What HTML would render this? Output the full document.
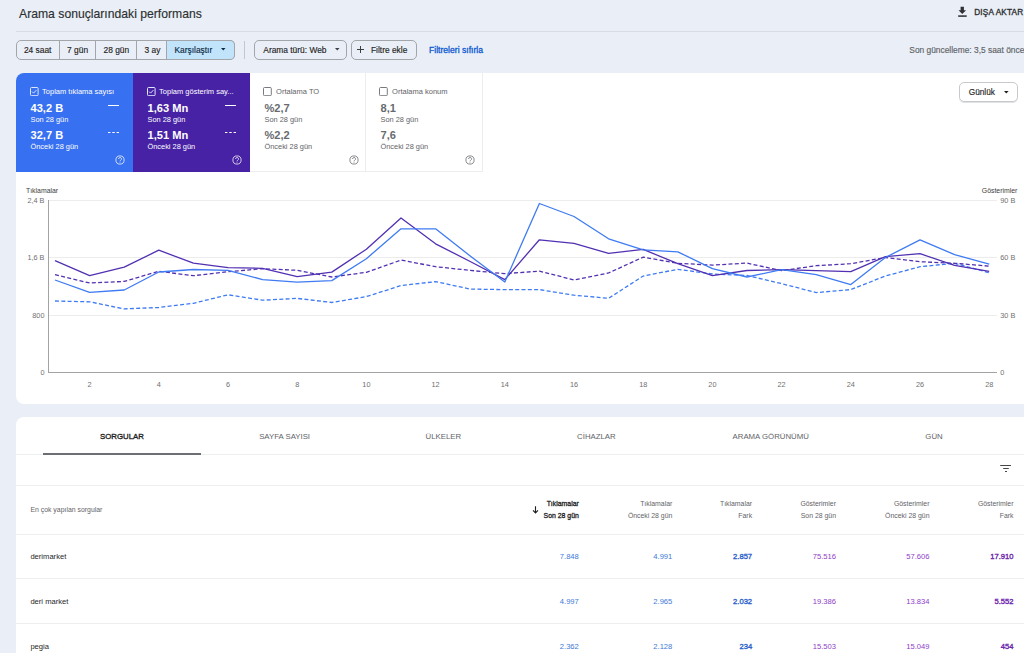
<!DOCTYPE html>
<html><head><meta charset="utf-8"><style>
html,body{margin:0;padding:0;}
body{width:1024px;height:653px;overflow:hidden;position:relative;background:#eaeff7;font-family:"Liberation Sans",sans-serif;}
.t{position:absolute;line-height:1;white-space:nowrap;-webkit-text-stroke:0.15px currentColor;}
</style></head><body>
<div class="t" style="left:19.00px;top:8.00px;font-size:12.2px;color:#2d2f31;font-weight:400;">Arama sonuçlarındaki performans</div>
<svg style="position:absolute;left:957px;top:6px" width="11" height="12" viewBox="0 0 11 12"><path d="M3.6 0.7h3.3v3.6h2.2L5.25 7.9 1.5 4.3h2.1z" fill="#303134"/><rect x="1.2" y="9.2" width="8.5" height="1.8" fill="#4a4c4f"/></svg>
<div class="t" style="left:974.20px;top:9.00px;font-size:8.2px;color:#303134;font-weight:400;letter-spacing:0.2px;-webkit-text-stroke:0.35px #303134;">DIŞA AKTAR</div>
<div style="position:absolute;left:16px;top:31px;width:1008px;height:1px;background:#d9dde3"></div>
<div style="position:absolute;left:16px;top:40px;width:219px;height:19.5px;border:1px solid #a2a5aa;border-radius:5px;box-sizing:border-box;overflow:hidden"></div>
<div style="position:absolute;left:166px;top:40px;width:69px;height:19.5px;background:#c2e4fb;border:1px solid #a2a5aa;border-left:none;border-radius:0 5px 5px 0;box-sizing:border-box"></div>
<div style="position:absolute;left:59px;top:40px;width:1px;height:19.5px;background:#a2a5aa"></div>
<div style="position:absolute;left:95px;top:40px;width:1px;height:19.5px;background:#a2a5aa"></div>
<div style="position:absolute;left:136px;top:40px;width:1px;height:19.5px;background:#a2a5aa"></div>
<div style="position:absolute;left:166px;top:40px;width:1px;height:19.5px;background:#a2a5aa"></div>
<div class="t" style="left:23.90px;top:46.00px;font-size:8.4px;color:#1f1f1f;font-weight:400;">24 saat</div>
<div class="t" style="left:67.10px;top:46.00px;font-size:8.4px;color:#1f1f1f;font-weight:400;">7 gün</div>
<div class="t" style="left:103.50px;top:46.00px;font-size:8.4px;color:#1f1f1f;font-weight:400;">28 gün</div>
<div class="t" style="left:144.50px;top:46.00px;font-size:8.4px;color:#1f1f1f;font-weight:400;">3 ay</div>
<div class="t" style="left:174.50px;top:46.00px;font-size:8.4px;color:#0b2a45;font-weight:400;">Karşılaştır</div>
<svg style="position:absolute;left:220.5px;top:48px" width="5" height="3"><path d="M0 0h4.5L2.25 2.5z" fill="#0b2a45"/></svg>
<div style="position:absolute;left:244px;top:40.5px;width:1px;height:18.5px;background:#c4c7cc"></div>
<div style="position:absolute;left:253.7px;top:40.3px;width:93px;height:19.3px;border:1px solid #a2a5aa;border-radius:5px;box-sizing:border-box"></div>
<div class="t" style="left:263.30px;top:46.00px;font-size:8.4px;color:#1f1f1f;font-weight:400;">Arama türü: Web</div>
<svg style="position:absolute;left:334.5px;top:48px" width="5" height="3"><path d="M0 0h4.5L2.25 2.5z" fill="#3c4043"/></svg>
<div style="position:absolute;left:351.3px;top:40.3px;width:66.1px;height:19.3px;border:1px solid #a2a5aa;border-radius:5px;box-sizing:border-box"></div>
<svg style="position:absolute;left:357.3px;top:46.3px" width="8" height="8"><path d="M3.5 0v7M0 3.5h7" stroke="#3c4043" stroke-width="1"/></svg>
<div class="t" style="left:371.00px;top:46.00px;font-size:8.4px;color:#1f1f1f;font-weight:400;">Filtre ekle</div>
<div class="t" style="left:429.00px;top:46.00px;font-size:8.6px;color:#0b57d0;font-weight:400;-webkit-text-stroke:0.3px #0b57d0;">Filtreleri sıfırla</div>
<div class="t" style="left:909.30px;top:46.00px;font-size:8.4px;color:#5f6368;font-weight:400;">Son güncelleme: 3,5 saat önce</div>
<div style="position:absolute;left:16px;top:73px;width:1020px;height:331px;background:#fff;border-radius:8px"></div>
<div style="position:absolute;left:16px;top:73px;width:117px;height:99px;background:#3770f1;border-radius:8px 0 0 0"></div>
<div style="position:absolute;left:133px;top:73px;width:117px;height:99px;background:#4822a5"></div>
<div style="position:absolute;left:365px;top:73px;width:1px;height:99px;background:#ebedef"></div>
<div style="position:absolute;left:482px;top:73px;width:1px;height:99px;background:#ebedef"></div>
<div style="position:absolute;left:250px;top:171px;width:233px;height:1px;background:#ebedef"></div>
<svg style="position:absolute;left:29.5px;top:87px" width="9" height="9" viewBox="0 0 9 9"><rect x="0.5" y="0.5" width="7.6" height="8.2" rx="1" fill="none" stroke="#dfe7fd" stroke-width="1"/><path d="M2.1 4.6l1.5 1.5 2.8-3" fill="none" stroke="#e8eefe" stroke-width="0.9"/></svg>
<div class="t" style="left:42.10px;top:88.00px;font-size:7.5px;color:#ffffff;font-weight:400;-webkit-text-stroke:0;">Toplam tıklama sayısı</div>
<div class="t" style="left:30.50px;top:103.00px;font-size:11.1px;color:#ffffff;font-weight:700;-webkit-text-stroke:0;">43,2 B</div>
<div class="t" style="left:30.50px;top:116.00px;font-size:7.4px;color:#ffffff;font-weight:400;-webkit-text-stroke:0;">Son 28 gün</div>
<div class="t" style="left:30.50px;top:130.00px;font-size:11.1px;color:#ffffff;font-weight:700;-webkit-text-stroke:0;">32,7 B</div>
<div class="t" style="left:30.50px;top:143.00px;font-size:7.4px;color:#ffffff;font-weight:400;-webkit-text-stroke:0;">Önceki 28 gün</div>
<div style="position:absolute;left:107.8px;top:105.2px;width:11px;height:1.3px;background:#fff"></div>
<svg style="position:absolute;left:107.8px;top:131.6px" width="11" height="1.5"><path d="M0 0.65h11" stroke="#fff" stroke-width="1.3" stroke-dasharray="2.4 1.9"/></svg>
<svg style="position:absolute;left:115.2px;top:154.5px" width="10" height="10" viewBox="0 0 10 10"><circle cx="5" cy="5" r="4.1" fill="none" stroke="#ffffff" stroke-width="0.75"/><path d="M3.6 4a1.45 1.45 0 1 1 2.1 1.25c-0.45 0.3-0.65 0.5-0.65 1.05" fill="none" stroke="#ffffff" stroke-width="0.75"/><circle cx="5" cy="7.2" r="0.45" fill="#ffffff"/></svg>
<svg style="position:absolute;left:146.5px;top:87px" width="9" height="9" viewBox="0 0 9 9"><rect x="0.5" y="0.5" width="7.6" height="8.2" rx="1" fill="none" stroke="#dfe7fd" stroke-width="1"/><path d="M2.1 4.6l1.5 1.5 2.8-3" fill="none" stroke="#e8eefe" stroke-width="0.9"/></svg>
<div class="t" style="left:159.10px;top:88.00px;font-size:7.5px;color:#ffffff;font-weight:400;-webkit-text-stroke:0;">Toplam gösterim say...</div>
<div class="t" style="left:147.50px;top:103.00px;font-size:11.1px;color:#ffffff;font-weight:700;-webkit-text-stroke:0;">1,63 Mn</div>
<div class="t" style="left:147.50px;top:116.00px;font-size:7.4px;color:#ffffff;font-weight:400;-webkit-text-stroke:0;">Son 28 gün</div>
<div class="t" style="left:147.50px;top:130.00px;font-size:11.1px;color:#ffffff;font-weight:700;-webkit-text-stroke:0;">1,51 Mn</div>
<div class="t" style="left:147.50px;top:143.00px;font-size:7.4px;color:#ffffff;font-weight:400;-webkit-text-stroke:0;">Önceki 28 gün</div>
<div style="position:absolute;left:224.8px;top:105.2px;width:11px;height:1.3px;background:#fff"></div>
<svg style="position:absolute;left:224.8px;top:131.6px" width="11" height="1.5"><path d="M0 0.65h11" stroke="#fff" stroke-width="1.3" stroke-dasharray="2.4 1.9"/></svg>
<svg style="position:absolute;left:232.2px;top:154.5px" width="10" height="10" viewBox="0 0 10 10"><circle cx="5" cy="5" r="4.1" fill="none" stroke="#ffffff" stroke-width="0.75"/><path d="M3.6 4a1.45 1.45 0 1 1 2.1 1.25c-0.45 0.3-0.65 0.5-0.65 1.05" fill="none" stroke="#ffffff" stroke-width="0.75"/><circle cx="5" cy="7.2" r="0.45" fill="#ffffff"/></svg>
<svg style="position:absolute;left:263px;top:87px" width="9" height="9" viewBox="0 0 9 9"><rect x="0.5" y="0.5" width="7.8" height="8.2" rx="1" fill="none" stroke="#6f7378" stroke-width="0.95"/></svg>
<div class="t" style="left:276.10px;top:88.00px;font-size:7.5px;color:#5f6368;font-weight:400;-webkit-text-stroke:0;">Ortalama TO</div>
<div class="t" style="left:264.50px;top:103.00px;font-size:11.1px;color:#676b70;font-weight:700;-webkit-text-stroke:0;">%2,7</div>
<div class="t" style="left:264.50px;top:116.00px;font-size:7.4px;color:#5f6368;font-weight:400;-webkit-text-stroke:0;">Son 28 gün</div>
<div class="t" style="left:264.50px;top:130.00px;font-size:11.1px;color:#676b70;font-weight:700;-webkit-text-stroke:0;">%2,2</div>
<div class="t" style="left:264.50px;top:143.00px;font-size:7.4px;color:#5f6368;font-weight:400;-webkit-text-stroke:0;">Önceki 28 gün</div>
<svg style="position:absolute;left:349.2px;top:154.5px" width="10" height="10" viewBox="0 0 10 10"><circle cx="5" cy="5" r="4.1" fill="none" stroke="#5f6368" stroke-width="0.75"/><path d="M3.6 4a1.45 1.45 0 1 1 2.1 1.25c-0.45 0.3-0.65 0.5-0.65 1.05" fill="none" stroke="#5f6368" stroke-width="0.75"/><circle cx="5" cy="7.2" r="0.45" fill="#5f6368"/></svg>
<svg style="position:absolute;left:379px;top:87px" width="9" height="9" viewBox="0 0 9 9"><rect x="0.5" y="0.5" width="7.8" height="8.2" rx="1" fill="none" stroke="#6f7378" stroke-width="0.95"/></svg>
<div class="t" style="left:392.10px;top:88.00px;font-size:7.5px;color:#5f6368;font-weight:400;-webkit-text-stroke:0;">Ortalama konum</div>
<div class="t" style="left:380.50px;top:103.00px;font-size:11.1px;color:#676b70;font-weight:700;-webkit-text-stroke:0;">8,1</div>
<div class="t" style="left:380.50px;top:116.00px;font-size:7.4px;color:#5f6368;font-weight:400;-webkit-text-stroke:0;">Son 28 gün</div>
<div class="t" style="left:380.50px;top:130.00px;font-size:11.1px;color:#676b70;font-weight:700;-webkit-text-stroke:0;">7,6</div>
<div class="t" style="left:380.50px;top:143.00px;font-size:7.4px;color:#5f6368;font-weight:400;-webkit-text-stroke:0;">Önceki 28 gün</div>
<svg style="position:absolute;left:465.2px;top:154.5px" width="10" height="10" viewBox="0 0 10 10"><circle cx="5" cy="5" r="4.1" fill="none" stroke="#5f6368" stroke-width="0.75"/><path d="M3.6 4a1.45 1.45 0 1 1 2.1 1.25c-0.45 0.3-0.65 0.5-0.65 1.05" fill="none" stroke="#5f6368" stroke-width="0.75"/><circle cx="5" cy="7.2" r="0.45" fill="#5f6368"/></svg>
<div style="position:absolute;left:959px;top:82px;width:58.5px;height:19.5px;border:1px solid #c7c9cc;border-radius:5px;box-sizing:border-box;box-shadow:0 1px 0 #e0e2e5"></div>
<div class="t" style="left:968.70px;top:88.00px;font-size:8.3px;color:#1f1f1f;font-weight:400;">Günlük</div>
<svg style="position:absolute;left:1004.3px;top:91px" width="5" height="3"><path d="M0 0h4.6L2.3 2.5z" fill="#1f1f1f"/></svg>
<div class="t" style="left:26.00px;top:188.00px;font-size:6.9px;color:#3c3c3c;font-weight:400;-webkit-text-stroke:0;">Tıklamalar</div>
<div class="t" style="right:6.60px;top:188.00px;font-size:6.9px;color:#3c3c3c;font-weight:400;-webkit-text-stroke:0;">Gösterimler</div>
<div class="t" style="right:979.50px;top:197.00px;font-size:7.3px;color:#707070;font-weight:400;-webkit-text-stroke:0;">2,4 B</div>
<div class="t" style="left:1000.30px;top:197.00px;font-size:7.3px;color:#707070;font-weight:400;-webkit-text-stroke:0;">90 B</div>
<div class="t" style="right:979.50px;top:254.00px;font-size:7.3px;color:#707070;font-weight:400;-webkit-text-stroke:0;">1,6 B</div>
<div class="t" style="left:1000.30px;top:254.00px;font-size:7.3px;color:#707070;font-weight:400;-webkit-text-stroke:0;">60 B</div>
<div class="t" style="right:979.50px;top:312.00px;font-size:7.3px;color:#707070;font-weight:400;-webkit-text-stroke:0;">800</div>
<div class="t" style="left:1000.30px;top:312.00px;font-size:7.3px;color:#707070;font-weight:400;-webkit-text-stroke:0;">30 B</div>
<div class="t" style="right:979.50px;top:369.00px;font-size:7.3px;color:#707070;font-weight:400;-webkit-text-stroke:0;">0</div>
<div class="t" style="left:1000.30px;top:369.00px;font-size:7.3px;color:#707070;font-weight:400;-webkit-text-stroke:0;">0</div>
<div class="t" style="left:-110.40px;width:400px;text-align:center;top:381.00px;font-size:7.3px;color:#707070;font-weight:400;-webkit-text-stroke:0;">2</div>
<div class="t" style="left:-41.20px;width:400px;text-align:center;top:381.00px;font-size:7.3px;color:#707070;font-weight:400;-webkit-text-stroke:0;">4</div>
<div class="t" style="left:28.00px;width:400px;text-align:center;top:381.00px;font-size:7.3px;color:#707070;font-weight:400;-webkit-text-stroke:0;">6</div>
<div class="t" style="left:97.20px;width:400px;text-align:center;top:381.00px;font-size:7.3px;color:#707070;font-weight:400;-webkit-text-stroke:0;">8</div>
<div class="t" style="left:166.40px;width:400px;text-align:center;top:381.00px;font-size:7.3px;color:#707070;font-weight:400;-webkit-text-stroke:0;">10</div>
<div class="t" style="left:235.60px;width:400px;text-align:center;top:381.00px;font-size:7.3px;color:#707070;font-weight:400;-webkit-text-stroke:0;">12</div>
<div class="t" style="left:304.80px;width:400px;text-align:center;top:381.00px;font-size:7.3px;color:#707070;font-weight:400;-webkit-text-stroke:0;">14</div>
<div class="t" style="left:374.00px;width:400px;text-align:center;top:381.00px;font-size:7.3px;color:#707070;font-weight:400;-webkit-text-stroke:0;">16</div>
<div class="t" style="left:443.20px;width:400px;text-align:center;top:381.00px;font-size:7.3px;color:#707070;font-weight:400;-webkit-text-stroke:0;">18</div>
<div class="t" style="left:512.40px;width:400px;text-align:center;top:381.00px;font-size:7.3px;color:#707070;font-weight:400;-webkit-text-stroke:0;">20</div>
<div class="t" style="left:581.60px;width:400px;text-align:center;top:381.00px;font-size:7.3px;color:#707070;font-weight:400;-webkit-text-stroke:0;">22</div>
<div class="t" style="left:650.80px;width:400px;text-align:center;top:381.00px;font-size:7.3px;color:#707070;font-weight:400;-webkit-text-stroke:0;">24</div>
<div class="t" style="left:720.00px;width:400px;text-align:center;top:381.00px;font-size:7.3px;color:#707070;font-weight:400;-webkit-text-stroke:0;">26</div>
<div class="t" style="left:789.20px;width:400px;text-align:center;top:381.00px;font-size:7.3px;color:#707070;font-weight:400;-webkit-text-stroke:0;">28</div>
<svg style="position:absolute;left:0;top:0" width="1024" height="653"><line x1="48" y1="200.5" x2="997" y2="200.5" stroke="#ececec" stroke-width="1"/><line x1="48" y1="257.5" x2="997" y2="257.5" stroke="#ececec" stroke-width="1"/><line x1="48" y1="315.5" x2="997" y2="315.5" stroke="#ececec" stroke-width="1"/><line x1="48" y1="372.5" x2="997" y2="372.5" stroke="#a3a3a3" stroke-width="1"/><line x1="48.5" y1="200" x2="48.5" y2="373" stroke="#a3a3a3" stroke-width="1"/><polyline points="55.0,301.0 89.6,301.8 124.2,308.9 158.8,307.5 193.4,303.3 228.0,294.8 262.6,300.2 297.2,298.4 331.8,302.5 366.4,296.6 401.0,285.6 435.6,281.6 470.2,289.1 504.8,289.6 539.4,289.6 574.0,295.2 608.6,298.3 643.2,276.0 677.8,269.3 712.4,274.0 747.0,275.5 781.6,283.6 816.2,292.6 850.8,289.6 885.4,276.0 920.0,266.7 954.6,263.3 989.2,272.7" fill="none" stroke="#3f7bf2" stroke-width="1.3" stroke-dasharray="4 2.3"/><polyline points="55.0,274.7 89.6,283.0 124.2,281.4 158.8,271.3 193.4,275.7 228.0,271.7 262.6,268.7 297.2,270.3 331.8,277.0 366.4,272.3 401.0,260.1 435.6,266.7 470.2,270.4 504.8,273.7 539.4,271.1 574.0,280.0 608.6,273.0 643.2,257.1 677.8,263.3 712.4,265.1 747.0,263.1 781.6,270.7 816.2,265.7 850.8,263.7 885.4,257.5 920.0,261.7 954.6,263.3 989.2,266.1" fill="none" stroke="#5130b2" stroke-width="1.3" stroke-dasharray="4 2.3"/><polyline points="55.0,260.7 89.6,275.7 124.2,267.1 158.8,250.2 193.4,263.2 228.0,267.7 262.6,268.3 297.2,276.7 331.8,272.1 366.4,249.2 401.0,217.9 435.6,243.8 470.2,261.5 504.8,279.6 539.4,239.8 574.0,243.4 608.6,253.3 643.2,249.4 677.8,263.7 712.4,275.7 747.0,270.5 781.6,269.7 816.2,270.7 850.8,271.7 885.4,256.7 920.0,253.7 954.6,265.3 989.2,271.3" fill="none" stroke="#5130b2" stroke-width="1.3" stroke-linejoin="round"/><polyline points="55.0,280.0 89.6,292.4 124.2,290.0 158.8,272.0 193.4,269.5 228.0,270.3 262.6,279.6 297.2,282.2 331.8,280.6 366.4,258.7 401.0,228.8 435.6,228.8 470.2,256.0 504.8,282.0 539.4,203.5 574.0,216.5 608.6,238.8 643.2,249.8 677.8,251.8 712.4,268.7 747.0,277.0 781.6,269.7 816.2,274.7 850.8,284.6 885.4,257.5 920.0,239.8 954.6,254.7 989.2,264.1" fill="none" stroke="#3f7bf2" stroke-width="1.3" stroke-linejoin="round"/></svg>
<div style="position:absolute;left:16px;top:417px;width:1020px;height:300px;background:#fff;border-radius:8px"></div>
<div class="t" style="left:-78.00px;width:400px;text-align:center;top:433.00px;font-size:7.8px;color:#1f1f1f;font-weight:400;-webkit-text-stroke:0.35px #1f1f1f;">SORGULAR</div>
<div class="t" style="left:84.60px;width:400px;text-align:center;top:433.00px;font-size:7.8px;color:#5f6368;font-weight:400;-webkit-text-stroke:0;">SAYFA SAYISI</div>
<div class="t" style="left:243.30px;width:400px;text-align:center;top:433.00px;font-size:7.8px;color:#5f6368;font-weight:400;-webkit-text-stroke:0;">ÜLKELER</div>
<div class="t" style="left:396.40px;width:400px;text-align:center;top:433.00px;font-size:7.8px;color:#5f6368;font-weight:400;-webkit-text-stroke:0;">CİHAZLAR</div>
<div class="t" style="left:570.70px;width:400px;text-align:center;top:433.00px;font-size:7.8px;color:#5f6368;font-weight:400;-webkit-text-stroke:0;">ARAMA GÖRÜNÜMÜ</div>
<div class="t" style="left:734.00px;width:400px;text-align:center;top:433.00px;font-size:7.8px;color:#5f6368;font-weight:400;-webkit-text-stroke:0;">GÜN</div>
<div style="position:absolute;left:16px;top:454px;width:1008px;height:1px;background:#eceef0"></div>
<div style="position:absolute;left:43px;top:452.5px;width:158px;height:2px;background:#6b6e72"></div>
<svg style="position:absolute;left:1000px;top:464px" width="12" height="9"><path d="M0.2 1.5h10.8M3.2 4.5h5.6M5 7.5h2" stroke="#444746" stroke-width="1.05"/></svg>
<div style="position:absolute;left:16px;top:485px;width:1008px;height:1px;background:#eceef0"></div>
<div class="t" style="left:30.40px;top:507.00px;font-size:6.9px;color:#5f6368;font-weight:400;-webkit-text-stroke:0;">En çok yapılan sorgular</div>
<div class="t" style="right:445.20px;top:501.00px;font-size:6.9px;color:#1f1f1f;font-weight:400;-webkit-text-stroke:0.3px #1f1f1f;">Tıklamalar</div>
<div class="t" style="right:445.20px;top:513.00px;font-size:6.9px;color:#1f1f1f;font-weight:400;-webkit-text-stroke:0.3px #1f1f1f;">Son 28 gün</div>
<div class="t" style="right:351.70px;top:501.00px;font-size:6.9px;color:#5f6368;font-weight:400;-webkit-text-stroke:0;">Tıklamalar</div>
<div class="t" style="right:351.70px;top:513.00px;font-size:6.9px;color:#5f6368;font-weight:400;-webkit-text-stroke:0;">Önceki 28 gün</div>
<div class="t" style="right:271.90px;top:501.00px;font-size:6.9px;color:#5f6368;font-weight:400;-webkit-text-stroke:0;">Tıklamalar</div>
<div class="t" style="right:271.90px;top:513.00px;font-size:6.9px;color:#5f6368;font-weight:400;-webkit-text-stroke:0;">Fark</div>
<div class="t" style="right:188.00px;top:501.00px;font-size:6.9px;color:#5f6368;font-weight:400;-webkit-text-stroke:0;">Gösterimler</div>
<div class="t" style="right:188.00px;top:513.00px;font-size:6.9px;color:#5f6368;font-weight:400;-webkit-text-stroke:0;">Son 28 gün</div>
<div class="t" style="right:94.50px;top:501.00px;font-size:6.9px;color:#5f6368;font-weight:400;-webkit-text-stroke:0;">Gösterimler</div>
<div class="t" style="right:94.50px;top:513.00px;font-size:6.9px;color:#5f6368;font-weight:400;-webkit-text-stroke:0;">Önceki 28 gün</div>
<div class="t" style="right:10.50px;top:501.00px;font-size:6.9px;color:#5f6368;font-weight:400;-webkit-text-stroke:0;">Gösterimler</div>
<div class="t" style="right:10.50px;top:513.00px;font-size:6.9px;color:#5f6368;font-weight:400;-webkit-text-stroke:0;">Fark</div>
<svg style="position:absolute;left:532px;top:506px" width="7" height="8"><path d="M3.5 0.3v6.6M1 4.3l2.5 2.6 2.5-2.6" fill="none" stroke="#1f1f1f" stroke-width="1.1"/></svg>
<div style="position:absolute;left:16px;top:534px;width:1008px;height:1px;background:#eceef0"></div>
<div class="t" style="left:30.40px;top:553.00px;font-size:7.6px;color:#1f1f1f;font-weight:400;-webkit-text-stroke:0;">derimarket</div>
<div class="t" style="right:445.20px;top:553.00px;font-size:7.6px;color:#4079da;font-weight:400;-webkit-text-stroke:0;">7.848</div>
<div class="t" style="right:351.70px;top:553.00px;font-size:7.6px;color:#4079da;font-weight:400;-webkit-text-stroke:0;">4.991</div>
<div class="t" style="right:271.90px;top:553.00px;font-size:7.6px;color:#2d62cc;font-weight:400;-webkit-text-stroke:0.35px #2d62cc;">2.857</div>
<div class="t" style="right:188.00px;top:553.00px;font-size:7.6px;color:#8e3dca;font-weight:400;-webkit-text-stroke:0;">75.516</div>
<div class="t" style="right:94.50px;top:553.00px;font-size:7.6px;color:#8e3dca;font-weight:400;-webkit-text-stroke:0;">57.606</div>
<div class="t" style="right:10.50px;top:553.00px;font-size:7.6px;color:#6c24ad;font-weight:400;-webkit-text-stroke:0.35px #6c24ad;">17.910</div>
<div style="position:absolute;left:16px;top:578.0px;width:1008px;height:1px;background:#eceef0"></div>
<div class="t" style="left:30.40px;top:598.00px;font-size:7.6px;color:#1f1f1f;font-weight:400;-webkit-text-stroke:0;">deri market</div>
<div class="t" style="right:445.20px;top:598.00px;font-size:7.6px;color:#4079da;font-weight:400;-webkit-text-stroke:0;">4.997</div>
<div class="t" style="right:351.70px;top:598.00px;font-size:7.6px;color:#4079da;font-weight:400;-webkit-text-stroke:0;">2.965</div>
<div class="t" style="right:271.90px;top:598.00px;font-size:7.6px;color:#2d62cc;font-weight:400;-webkit-text-stroke:0.35px #2d62cc;">2.032</div>
<div class="t" style="right:188.00px;top:598.00px;font-size:7.6px;color:#8e3dca;font-weight:400;-webkit-text-stroke:0;">19.386</div>
<div class="t" style="right:94.50px;top:598.00px;font-size:7.6px;color:#8e3dca;font-weight:400;-webkit-text-stroke:0;">13.834</div>
<div class="t" style="right:10.50px;top:598.00px;font-size:7.6px;color:#6c24ad;font-weight:400;-webkit-text-stroke:0.35px #6c24ad;">5.552</div>
<div style="position:absolute;left:16px;top:622.7px;width:1008px;height:1px;background:#eceef0"></div>
<div class="t" style="left:30.40px;top:643.00px;font-size:7.6px;color:#1f1f1f;font-weight:400;-webkit-text-stroke:0;">pegia</div>
<div class="t" style="right:445.20px;top:643.00px;font-size:7.6px;color:#4079da;font-weight:400;-webkit-text-stroke:0;">2.362</div>
<div class="t" style="right:351.70px;top:643.00px;font-size:7.6px;color:#4079da;font-weight:400;-webkit-text-stroke:0;">2.128</div>
<div class="t" style="right:271.90px;top:643.00px;font-size:7.6px;color:#2d62cc;font-weight:400;-webkit-text-stroke:0.35px #2d62cc;">234</div>
<div class="t" style="right:188.00px;top:643.00px;font-size:7.6px;color:#8e3dca;font-weight:400;-webkit-text-stroke:0;">15.503</div>
<div class="t" style="right:94.50px;top:643.00px;font-size:7.6px;color:#8e3dca;font-weight:400;-webkit-text-stroke:0;">15.049</div>
<div class="t" style="right:10.50px;top:643.00px;font-size:7.6px;color:#6c24ad;font-weight:400;-webkit-text-stroke:0.35px #6c24ad;">454</div>
</body></html>
